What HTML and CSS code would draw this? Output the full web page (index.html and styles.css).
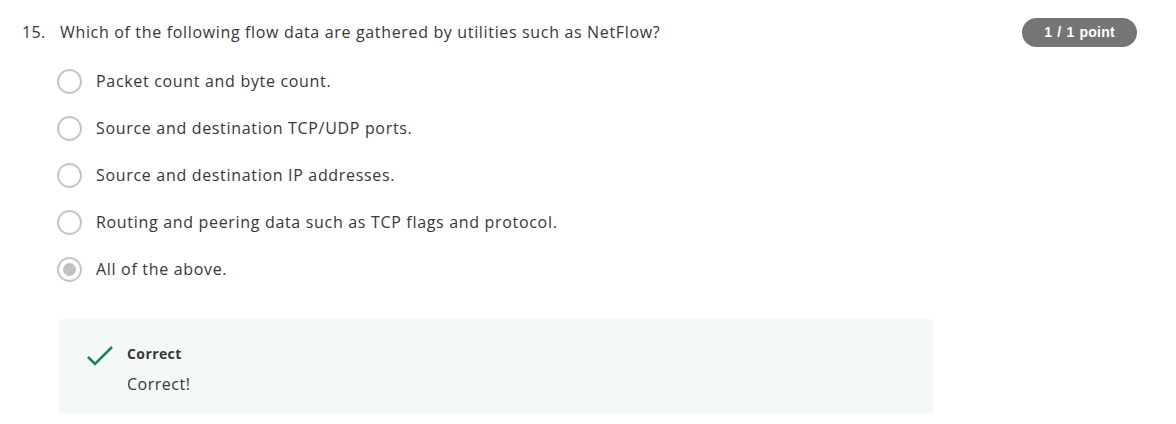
FILE: index.html
```html
<!DOCTYPE html>
<html>
<head>
<meta charset="utf-8">
<link rel="stylesheet" href="styles.css">
</head>
<body>
<div class="question">
  <div class="header">
    <div class="qtext"><span class="num">15.</span><span>Which of the following flow data are gathered by utilities such as NetFlow?</span></div>
    <div class="badge">1 / 1 point</div>
  </div>
  <div class="options">
    <div class="option"><span class="radio"></span><span class="label">Packet count and byte count.</span></div>
    <div class="option"><span class="radio"></span><span class="label">Source and destination TCP/UDP ports.</span></div>
    <div class="option"><span class="radio"></span><span class="label">Source and destination IP addresses.</span></div>
    <div class="option"><span class="radio"></span><span class="label">Routing and peering data such as TCP flags and protocol.</span></div>
    <div class="option"><span class="radio checked"></span><span class="label">All of the above.</span></div>
  </div>
  <div class="feedback">
    <svg class="check" width="28" height="22" viewBox="0 0 28 22"><path d="M2 12 L9 19 L26 2" fill="none" stroke="#1f8354" stroke-width="2.6"/></svg>
    <div class="fbtext">
      <div class="fbtitle">Correct</div>
      <div class="fbbody">Correct!</div>
    </div>
  </div>
</div>
</body>
</html>
```
FILE: styles.css
```css
html, body { margin: 0; padding: 0; background: #fff; }
body { font-family: "Open Sans", sans-serif; color: #373737; width: 1176px; height: 424px; overflow: hidden; }
.question { padding: 18px 39px 0 22px; }
.header { display: flex; justify-content: space-between; align-items: flex-start; }
.qtext { font-size: 16px; line-height: 28px; letter-spacing: 0.66px; display: flex; }
.num { width: 38px; letter-spacing: 0.3px; }
.badge { background: #757575; color: #fff; font-family: "Liberation Sans", Arial, sans-serif; font-weight: bold; font-size: 14px; height: 29px; line-height: 29px; width: 115px; text-align: center; border-radius: 15px; letter-spacing: 0.2px; word-spacing: 1px; }
.options { display: flex; flex-direction: column; padding-left: 35px; margin-top: 21px; gap: 21px; }
.option { display: flex; align-items: center; height: 26px; }
.radio { width: 21px; height: 21px; border: 2px solid #c6c6c6; border-radius: 50%; box-sizing: content-box; margin-right: 14px; position: relative; flex: none; }
.radio.checked::after { content: ""; position: absolute; left: 4px; top: 4px; width: 13px; height: 13px; border-radius: 50%; background: #c1c1c1; }
.label { font-size: 16px; letter-spacing: 0.68px; }
.feedback { margin: 37px 0 0 37px; width: 874px; height: 95px; background: #f4f9f8; display: flex; align-items: flex-start; box-sizing: border-box; padding: 24px 0 0 27px; }
.check { margin-top: 2px; flex: none; }
.fbtext { margin-left: 13px; }
.fbtitle { font-weight: bold; font-size: 14px; line-height: 22px; letter-spacing: 0.4px; }
.fbbody { font-size: 16px; line-height: 24px; margin-top: 7px; letter-spacing: 0.5px; }
```
